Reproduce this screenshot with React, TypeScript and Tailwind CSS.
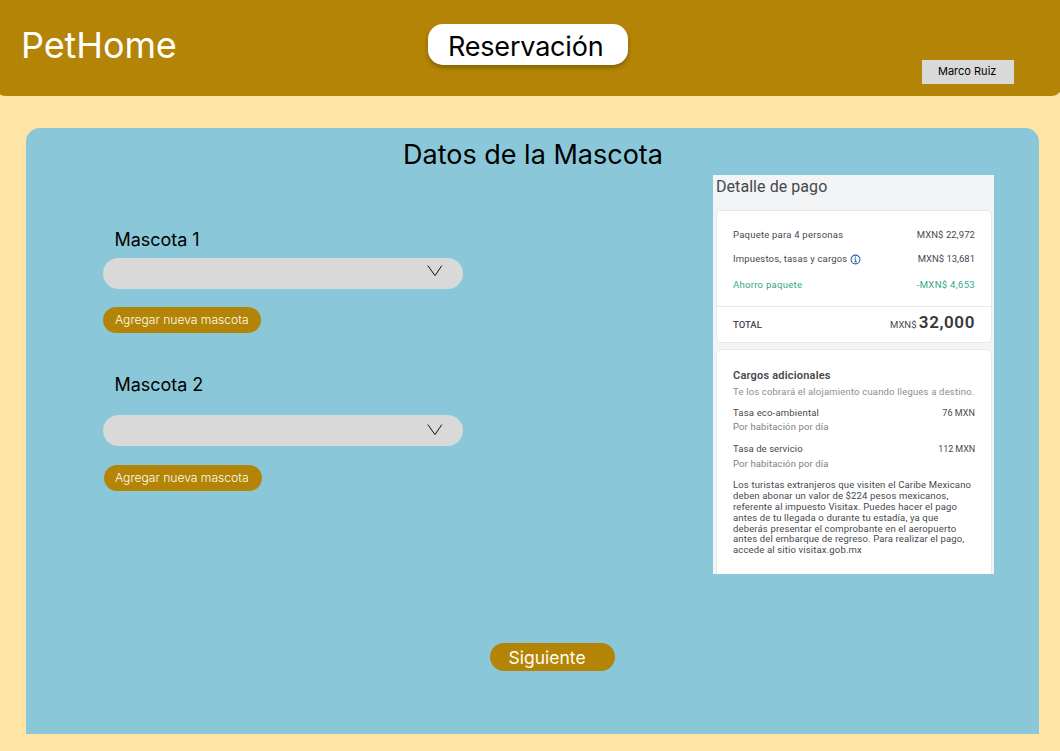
import type { ReactNode } from "react";

function Chevron({ className }: { className: string }) {
  return (
    <svg className={className} width="16" height="12" viewBox="0 0 16 12" fill="none" stroke="#111111" strokeWidth="1">
      <path d="M0.8 0.6 L8 10.6 L14.8 0.6" />
    </svg>
  );
}

function InfoIcon() {
  return (
    <svg className="ml-[3px] shrink-0" width="11" height="11" viewBox="0 0 11 11" fill="none" stroke="#2a62a8">
      <circle cx="5.5" cy="5.5" r="4.4" strokeWidth="1.1" />
      <path d="M4.4 4.9 H5.6 V7.8 M4.2 7.8 H7" strokeWidth="0.9" />
      <path d="M5 3.1 H6" strokeWidth="1.1" />
    </svg>
  );
}

function AddButton({ className }: { className: string }) {
  return (
    <button className={`flex h-[26px] w-[158px] items-center rounded-full bg-[#b48407] pt-[1px] text-[12.2px] leading-none font-light tracking-[-0.05px] whitespace-nowrap text-[#fffdf0] ${className}`}>
      Agregar nueva mascota
    </button>
  );
}

function Row({ className, label, value }: { className: string; label: ReactNode; value: ReactNode }) {
  return (
    <div className={`flex items-center justify-between whitespace-nowrap ${className}`}>
      <span className="flex items-center">{label}</span>
      <span>{value}</span>
    </div>
  );
}

function PaymentDetail() {
  return (
    <aside className="mt-[47px] h-[399px] w-[281px] overflow-hidden bg-[#f2f4f6] pl-[3px] font-[Roboto,sans-serif] text-[9.5px] leading-[12px] text-[#45494d]">
      <h2 className="h-[35px] text-[16px] leading-[23px] tracking-[0.06px] whitespace-nowrap">Detalle de pago</h2>
      <section className="h-[133px] w-[276px] rounded-[5px] border border-[#e6e9eb] bg-white">
        <div className="h-[96px] border-b border-[#e6e9eb] pt-[18px] pr-[16px] pl-[16px]">
          <Row className="h-[12px]" label={<span className="tracking-[0.22px]">Paquete para 4 personas</span>} value={<span className="tracking-[0.08px]">MXN$ 22,972</span>} />
          <Row className="mt-[12px] h-[12px]" label={<><span className="tracking-[0.16px]">Impuestos, tasas y cargos</span><InfoIcon /></>} value="MXN$ 13,681" />
          <Row className="mt-[14px] h-[12px] text-[#32a88a]" label={<span className="tracking-[0.28px]">Ahorro paquete</span>} value={<span className="tracking-[0.33px]">-MXN$ 4,653</span>} />
        </div>
        <div className="flex h-[35px] items-baseline justify-between px-[16px] pt-[6px]">
          <span className="font-medium">TOTAL</span>
          <span className="leading-[18px]">
            MXN$ <strong className="text-[17px] font-semibold tracking-[0.6px] text-[#34383c]">32,000</strong>
          </span>
        </div>
      </section>
      <section className="mt-[6px] h-[232px] w-[276px] rounded-t-[5px] border border-[#e6e9eb] bg-white px-[16px] pt-[20px]">
        <h3 className="text-[11px] font-semibold tracking-[0.2px] whitespace-nowrap">Cargos adicionales</h3>
        <p className="mt-[4px] tracking-[0.18px] whitespace-nowrap text-[#8a8e92]">Te los cobrará el alojamiento cuando llegues a destino.</p>
        <Row className="mt-[9px] h-[12px] tracking-[0.18px]" label="Tasa eco-ambiental" value={<span className="text-[9px] tracking-[0.05px]">76 MXN</span>} />
        <p className="mt-[2px] tracking-[0.13px] text-[#7d8185]">Por habitación por día</p>
        <Row className="mt-[10px] h-[12px] tracking-[0.08px]" label="Tasa de servicio" value={<span className="text-[9px] tracking-[-0.1px]">112 MXN</span>} />
        <p className="mt-[3px] tracking-[0.13px] text-[#7d8185]">Por habitación por día</p>
        <p className="mt-[10.4px] leading-[10.8px] tracking-[0.15px] whitespace-nowrap">
          Los turistas extranjeros que visiten el Caribe Mexicano<br />
          deben abonar un valor de $224 pesos mexicanos,<br />
          referente al impuesto Visitax. Puedes hacer el pago<br />
          antes de tu llegada o durante tu estadía, ya que<br />
          deberás presentar el comprobante en el aeropuerto<br />
          antes del embarque de regreso. Para realizar el pago,<br />
          accede al sitio visitax.gob.mx
        </p>
      </section>
    </aside>
  );
}

export default function App() {
  return (
    <div className="h-[751px] w-[1060px] overflow-hidden bg-[#ffe5a5] font-[Inter,sans-serif] text-black">
      <header className="-mr-[3px] -ml-[6px] flex h-[96px] items-start rounded-b-[12px] bg-[#b48407] pl-[27px]">
        <h1 className="mt-[23px] w-[407px] text-[36px] leading-[44px] font-normal tracking-[-0.1px] text-white">PetHome</h1>
        <div className="mt-[24px] flex h-[41px] w-[200px] items-center rounded-[15px] bg-white pt-[4px] pl-[20px] text-[27px] leading-none tracking-[-0.2px] shadow-[0_3px_4px_rgba(0,0,0,0.25)]">
          Reservación
        </div>
        <div className="mt-[60px] ml-[294px] flex h-[24px] w-[92px] items-center bg-[#d9d9d9] pb-[2px] pl-[16px] text-[11px] leading-none whitespace-nowrap">
          Marco Ruiz
        </div>
      </header>
      <main className="mt-[32px] ml-[26px] h-[606px] w-[1013px] rounded-t-[14px] bg-[#8ac8d9]">
        <div className="flex h-[490px]">
          <div className="ml-[77px] w-[360px] pt-[100px]">
            <label className="block pl-[11.5px] text-[18px] leading-[24px] tracking-[-0.03px]">Mascota 1</label>
            <div className="mt-[5.5px] flex h-[31.5px] w-[360px] justify-end rounded-[16px] bg-[#d9d9d9] pr-[20px]">
              <Chevron className="mt-[7.5px]" />
            </div>
            <AddButton className="mt-[17.5px] pl-[12px]" />
            <label className="mt-[40.5px] block pl-[11.5px] text-[18px] leading-[24px] tracking-[-0.03px]">Mascota 2</label>
            <div className="mt-[17.5px] flex h-[31.5px] w-[360px] justify-end rounded-[16px] bg-[#d9d9d9] pr-[20px]">
              <Chevron className="mt-[9.5px]" />
            </div>
            <AddButton className="mt-[18.5px] ml-[1px] pl-[11px]" />
          </div>
          <h2 className="mt-[10px] -ml-[60px] w-[310px] text-[27px] leading-[34px] whitespace-nowrap">Datos de la Mascota</h2>
          <PaymentDetail />
        </div>
        <button className="mt-[25px] ml-[463.5px] flex h-[27.5px] w-[125.5px] items-center rounded-full bg-[#b48407] pt-[2px] pl-[19px] text-[17.5px] leading-none text-[#fffdf0]">
          Siguiente
        </button>
      </main>
    </div>
  );
}
